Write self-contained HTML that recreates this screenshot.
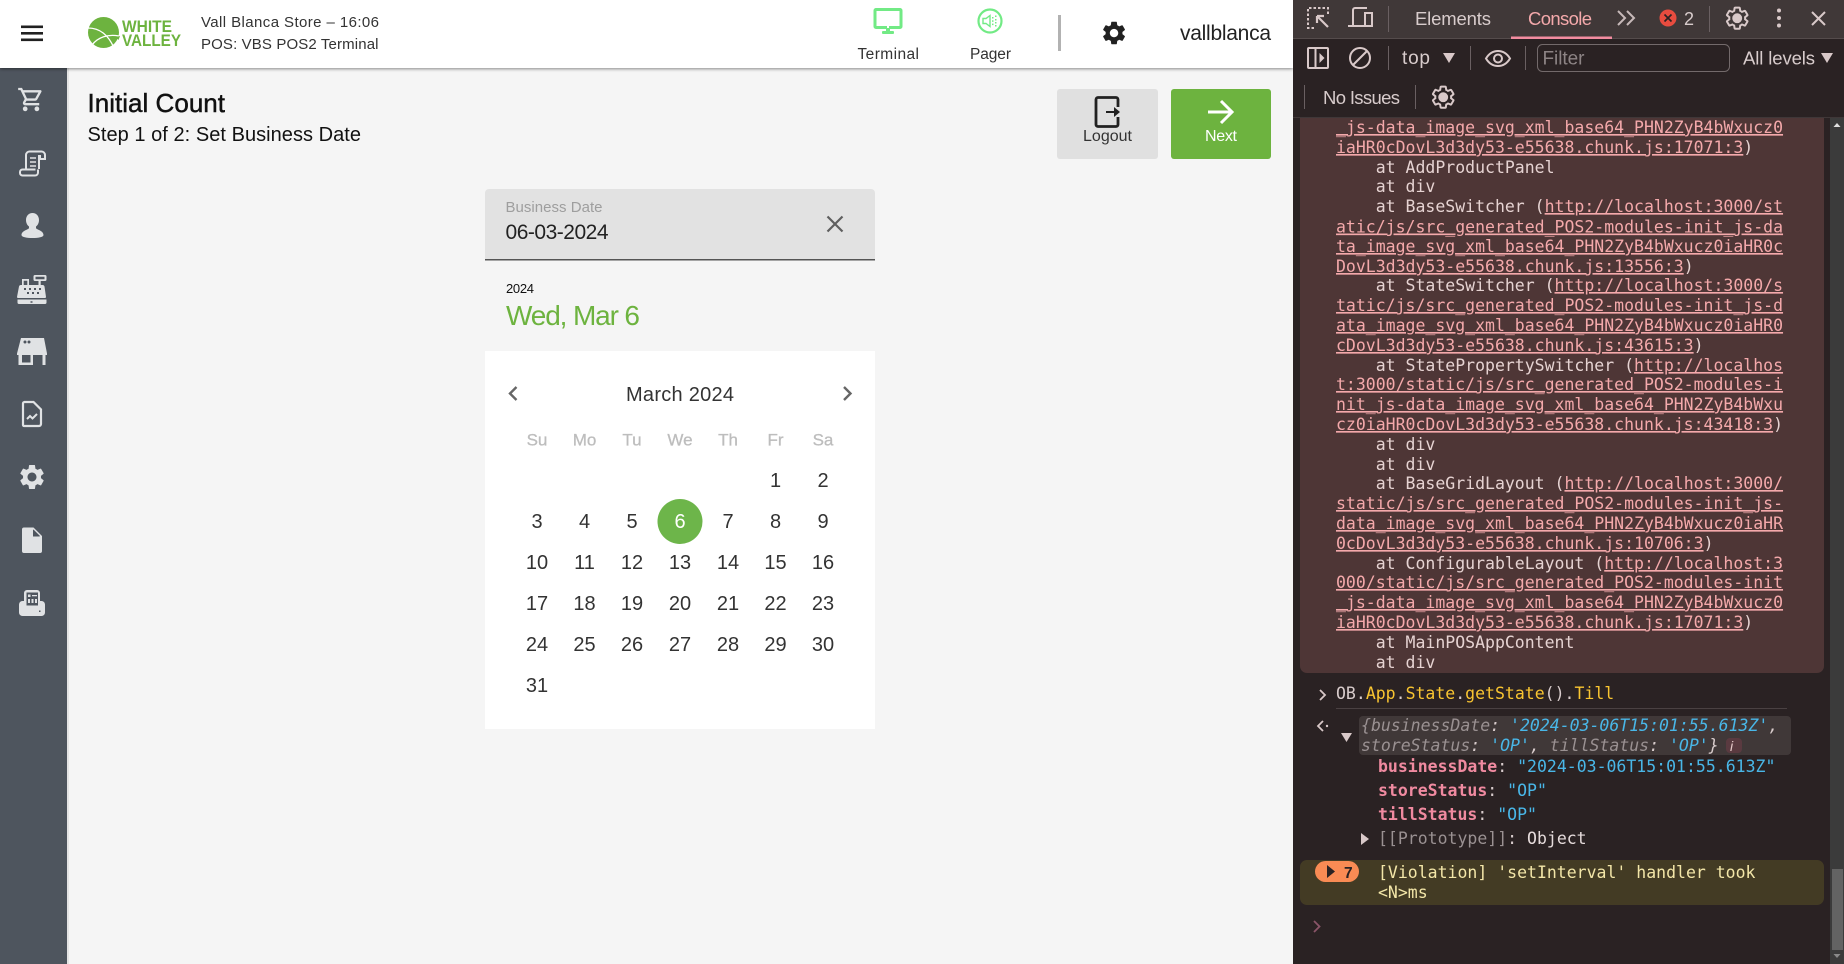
<!DOCTYPE html>
<html><head><meta charset="utf-8"><title>Initial Count</title>
<style>
html,body{margin:0;padding:0;width:1844px;height:964px;overflow:hidden;background:#f5f5f5}
svg{position:absolute;left:0;top:0;display:block}
text{font-family:"Liberation Sans",sans-serif}
.d{font-family:"DejaVu Sans Mono","Liberation Mono",monospace;font-size:16.5px;white-space:pre}
.l{fill:#f4a9ab;text-decoration:underline}
.p{fill:#e6d3d2}
.day{font-size:17px;fill:#bdbdbd;text-anchor:middle;stroke:#bdbdbd;stroke-width:.3px}
.n{font-size:20px;fill:#333;text-anchor:middle}
</style></head><body>
<svg width="1844" height="964" viewBox="0 0 1844 964" xmlns="http://www.w3.org/2000/svg">
<defs>
<filter id="sh" x="-5%" y="-20%" width="110%" height="160%"><feDropShadow dx="0" dy="1" stdDeviation="1.5" flood-color="#000" flood-opacity=".45"/></filter>
<path id="gear" d="M19.14,12.94c0.04-0.3,0.06-0.61,0.06-0.94c0-0.32-0.02-0.64-0.07-0.94l2.03-1.58c0.18-0.14,0.23-0.41,0.12-0.61 l-1.92-3.32c-0.12-0.22-0.37-0.29-0.59-0.22l-2.39,0.96c-0.5-0.38-1.03-0.7-1.62-0.94L14.4,2.81c-0.04-0.24-0.24-0.41-0.48-0.41 h-3.84c-0.24,0-0.43,0.17-0.47,0.41L9.25,5.35C8.66,5.59,8.12,5.92,7.63,6.29L5.24,5.33c-0.22-0.08-0.47,0-0.59,0.22L2.74,8.87 C2.62,9.08,2.66,9.34,2.86,9.48l2.03,1.58C4.84,11.36,4.8,11.69,4.8,12s0.02,0.64,0.07,0.94l-2.03,1.58 c-0.18,0.14-0.23,0.41-0.12,0.61l1.92,3.32c0.12,0.22,0.37,0.29,0.59,0.22l2.39-0.96c0.5,0.38,1.03,0.7,1.62,0.94l0.36,2.54 c0.05,0.24,0.24,0.41,0.48,0.41h3.84c0.24,0,0.44-0.17,0.47-0.41l0.36-2.54c0.59-0.24,1.13-0.56,1.62-0.94l2.39,0.96 c0.22,0.08,0.47,0,0.59-0.22l1.92-3.32c0.12-0.22,0.07-0.47-0.12-0.61L19.14,12.94z M12,15.6c-1.98,0-3.6-1.62-3.6-3.6 s1.62-3.6,3.6-3.6s3.6,1.62,3.6,3.6S13.98,15.6,12,15.6z"/>
</defs>

<!-- page bg -->
<rect width="1293" height="964" fill="#f5f5f5"/>

<!-- sidebar -->
<rect x="0" y="68" width="67" height="896" fill="#4e555e"/>
<rect x="67" y="68" width="2" height="896" fill="#d9d9d9" opacity=".6"/>

<!-- header -->
<rect width="1293" height="68" fill="#fff" filter="url(#sh)"/>
<g fill="#212121"><rect x="21" y="25.500" width="22" height="2.600"/><rect x="21" y="32" width="22" height="2.600"/><rect x="21" y="38.500" width="22" height="2.600"/></g>

<!-- logo -->
<circle cx="103.500" cy="32.500" r="15.500" fill="#6db33f"/>
<g fill="none" stroke="#fff" stroke-width="1.300"><path d="M88 28c11 0 20 6 26 20"/><path d="M92 45c6-8 16-11 27-9"/></g>
<path d="M116 37l4-1-1.500 4z" fill="#6db33f"/>
<text x="122" y="32" font-size="16.800" font-weight="700" fill="#6db33f" textLength="50" lengthAdjust="spacingAndGlyphs">WHITE</text>
<text x="122" y="46" font-size="16.800" font-weight="700" fill="#6db33f" textLength="59" lengthAdjust="spacingAndGlyphs">VALLEY</text>

<text x="201" y="27" font-size="15" fill="#333" textLength="178">Vall Blanca Store – 16:06</text>
<text x="201" y="49" font-size="15" fill="#333" textLength="177.500">POS: VBS POS2 Terminal</text>

<!-- terminal icon -->
<g fill="#72ea85">
<path d="M876 8h24a2.500 2.500 0 0 1 2.500 2.500v16a2.500 2.500 0 0 1-2.500 2.500h-24a2.500 2.500 0 0 1-2.500-2.500v-16a2.500 2.500 0 0 1 2.500-2.500zm.5 3v15h23v-15z" fill-rule="evenodd"/>
<rect x="886" y="29" width="4" height="3"/><rect x="882" y="31" width="12" height="3" rx="1"/><rect x="887" y="26" width="2" height="2" fill="#fff"/>
</g>
<text x="857.500" y="59" font-size="15.500" fill="#333" textLength="61.500">Terminal</text>
<!-- pager icon -->
<circle cx="990" cy="21" r="11.500" fill="none" stroke="#72ea85" stroke-width="2.200"/>
<path d="M983 18.500h3l4-3v11l-4-3h-3z" fill="none" stroke="#72ea85" stroke-width="1.400"/>
<g fill="#72ea85"><rect x="992" y="17" width="1.500" height="1.500"/><rect x="992" y="20.300" width="1.500" height="1.500"/><rect x="992" y="23.600" width="1.500" height="1.500"/><rect x="995" y="15.500" width="1.500" height="1.500"/><rect x="995" y="19" width="1.500" height="1.500"/><rect x="995" y="22" width="1.500" height="1.500"/><rect x="995" y="25" width="1.500" height="1.500"/></g>
<text x="970" y="59" font-size="15.500" fill="#333" textLength="41">Pager</text>
<rect x="1058" y="15" width="3" height="36" fill="#b2b2b2"/>
<use href="#gear" transform="translate(1100,19) scale(1.170)" fill="#212121"/>
<text x="1180" y="40" font-size="21" fill="#222" textLength="91">vallblanca</text>

<!-- titles -->
<text x="87.500" y="112" font-size="26" fill="#111" stroke="#111" stroke-width=".45" textLength="137.500">Initial Count</text>
<text x="87.500" y="141" font-size="20" fill="#111" textLength="273.500">Step 1 of 2: Set Business Date</text>

<!-- buttons -->
<rect x="1057" y="89" width="101" height="70" rx="3" fill="#e0e0e0"/>
<path d="M1118 101v-1.500a2 2 0 0 0-2-2h-18a2 2 0 0 0-2 2v25a2 2 0 0 0 2 2h18a2 2 0 0 0 2-2v-1.500" fill="none" stroke="#212121" stroke-width="2.800"/>
<path d="M1118 101v6M1118 117v6" stroke="#212121" stroke-width="2.800"/>
<path d="M1106 111h8v-4l6 5-6 5v-4h-8z" fill="#212121"/>
<text x="1083" y="141" font-size="16" fill="#333" textLength="49">Logout</text>
<rect x="1171" y="89" width="100" height="70" rx="3" fill="#6db33f"/>
<path d="M1208 112h24M1221 101l11 11-11 11" fill="none" stroke="#fff" stroke-width="3"/>
<text x="1205" y="141" font-size="16" fill="#fff" textLength="32">Next</text>

<!-- date field -->
<path d="M485 260v-67a4 4 0 0 1 4-4h382a4 4 0 0 1 4 4v67z" fill="#e2e2e2"/>
<rect x="485" y="259" width="390" height="1.500" fill="#555"/>
<text x="505.500" y="212" font-size="15" fill="#9e9e9e" textLength="97">Business Date</text>
<text x="505.500" y="239" font-size="21" fill="#222" textLength="103">06-03-2024</text>
<path d="M827.500 216.500l15 15M842.500 216.500l-15 15" stroke="#5f5f5f" stroke-width="2.200" fill="none"/>
<text x="506" y="293" font-size="13" fill="#111" textLength="28">2024</text>
<text x="506" y="325" font-size="28" fill="#6db33f" textLength="134">Wed, Mar 6</text>

<!-- calendar -->
<rect x="485" y="351" width="390" height="378" fill="#fff"/>
<text x="626" y="401" font-size="20" fill="#333" textLength="108">March 2024</text>
<path d="M516.500 387l-6.500 6.500 6.500 6.500" fill="none" stroke="#666" stroke-width="2.400"/>
<path d="M844 387l6.500 6.500-6.500 6.500" fill="none" stroke="#666" stroke-width="2.400"/>
<g class="h">
<text class="day" x="537" y="445.500">Su</text><text class="day" x="584.500" y="445.500">Mo</text><text class="day" x="632" y="445.500">Tu</text><text class="day" x="680" y="445.500">We</text><text class="day" x="728" y="445.500">Th</text><text class="day" x="775.500" y="445.500">Fr</text><text class="day" x="823" y="445.500">Sa</text>
</g>
<circle cx="680" cy="521.500" r="22.500" fill="#6db54a"/>
<text class="n" x="775.500" y="487">1</text><text class="n" x="823" y="487">2</text>
<text class="n" x="537" y="528">3</text><text class="n" x="584.500" y="528">4</text><text class="n" x="632" y="528">5</text><text class="n" x="680" y="528" style="fill:#fff">6</text><text class="n" x="728" y="528">7</text><text class="n" x="775.500" y="528">8</text><text class="n" x="823" y="528">9</text>
<text class="n" x="537" y="569">10</text><text class="n" x="584.500" y="569">11</text><text class="n" x="632" y="569">12</text><text class="n" x="680" y="569">13</text><text class="n" x="728" y="569">14</text><text class="n" x="775.500" y="569">15</text><text class="n" x="823" y="569">16</text>
<text class="n" x="537" y="610">17</text><text class="n" x="584.500" y="610">18</text><text class="n" x="632" y="610">19</text><text class="n" x="680" y="610">20</text><text class="n" x="728" y="610">21</text><text class="n" x="775.500" y="610">22</text><text class="n" x="823" y="610">23</text>
<text class="n" x="537" y="651">24</text><text class="n" x="584.500" y="651">25</text><text class="n" x="632" y="651">26</text><text class="n" x="680" y="651">27</text><text class="n" x="728" y="651">28</text><text class="n" x="775.500" y="651">29</text><text class="n" x="823" y="651">30</text>
<text class="n" x="537" y="692">31</text>

<!-- sidebar icons -->
<g fill="#e0e2e4">
<!-- cart -->
<path transform="translate(17,85.500) scale(1.170)" d="M15.550 13c.75 0 1.410-.41 1.750-1.030l3.580-6.490c.37-.66-.11-1.480-.87-1.480H5.210l-.94-2H1v2h2l3.600 7.590-1.350 2.440C4.520 15.370 5.480 17 7 17h12v-2H7l1.100-2h7.450zM6.160 6h12.150l-2.760 5H8.530L6.160 6zM7 18c-1.100 0-1.990.9-1.990 2S5.900 22 7 22s2-.9 2-2-.9-2-2-2zm10 0c-1.100 0-1.990.9-1.990 2s.89 2 1.990 2 2-.9 2-2-.9-2-2-2z"/>
<!-- receipt scroll -->
<g fill="none" stroke="#e0e2e4" stroke-width="2">
<path d="M26 169v-14a3.500 3.500 0 0 1 3.500-3.500h12a3.500 3.500 0 0 1 3.500 3.500v4h-5v-4"/>
<path d="M38 169.500v3a3 3 0 0 1-3 3h-12.500a2.500 2.500 0 0 1-2.500-2.500v-1a2.500 2.500 0 0 1 2.500-2.500h13"/>
<path d="M39 155v14"/>
<path d="M30 158h6M30 162h6M30 166h6" stroke-width="1.600"/>
</g>
<!-- person -->
<path d="M32.500 213c3.800 0 6.500 3 6.500 7 0 3-1.300 5.300-3 6.500v1.500c0 1.500 7.500 2.500 7.500 7 0 2-5 3-11 3s-11-1-11-3c0-4.500 7.500-5.500 7.500-7v-1.500c-1.700-1.200-3-3.500-3-6.500 0-4 2.700-7 6.500-7z"/>
<!-- register -->
<path fill-rule="evenodd" d="M35 275h10a1.500 1.500 0 0 1 1.500 1.500v3a1.500 1.500 0 0 1-1.500 1.500h-10a1.500 1.500 0 0 1-1.500-1.500v-3a1.500 1.500 0 0 1 1.500-1.500zm.5 1.700v2.600h9v-2.600z"/>
<rect x="38.500" y="281" width="2.200" height="4.500"/>
<path fill-rule="evenodd" d="M22 279h7v6h13.500a2 2 0 0 1 2 1.500l1.500 10.500a1 1 0 0 1-1 1H18a1 1 0 0 1-1-1l2-10.500a2 2 0 0 1 2-1.500h1zm1.700 1.700v4.300h3.600v-4.300zM24 288v2h2v-2zm5 0v2h2v-2zm5 0v2h2v-2zm5 0v2h2v-2zm-12 4v2h2v-2zm5 0v2h2v-2zm5 0v2h2v-2z"/>
<path fill-rule="evenodd" d="M17.500 299.500h29v3a1.500 1.500 0 0 1-1.500 1.500h-26a1.500 1.500 0 0 1-1.500-1.500zm13 1.700v1.600h2v-1.600z"/>
<!-- store -->
<path fill-rule="evenodd" d="M21 338h23l3 15.500v1.500h-1.500v10h-3v-10h-9.500v10h-14.500v-10h-1.500v-1.500zm1 17v7.500h8.500v-7.500zM25 340.500a1.500 1.500 0 1 0 0 3 1.500 1.500 0 0 0 0-3zm4 0a1.500 1.500 0 1 0 0 3 1.500 1.500 0 0 0 0-3z"/>
<!-- doc chart -->
<path fill="none" stroke="#e0e2e4" stroke-width="2.200" d="M24 402h9.500l7.500 7.500v14.500a2 2 0 0 1-2 2h-15a1 1 0 0 1-1-1v-21.500a1.500 1.500 0 0 1 1.500-1.500z"/>
<path fill="none" stroke="#e0e2e4" stroke-width="2" d="M27 419l3-3 2.500 2.500 4.500-4.500"/>
<!-- gear -->
<use href="#gear" transform="translate(17,462) scale(1.250)"/>
<!-- doc -->
<path d="M24 527.500h9.500l8.500 8.500v15a2 2 0 0 1-2 2h-16a2 2 0 0 1-2-2v-21.500a2 2 0 0 1 2-2zM33 529.500v7h7z" fill-rule="evenodd"/>
<path d="M33.500 529.500l6.500 6.500h-6.500z" fill="#4e555e"/>
<!-- pos -->
<path fill-rule="evenodd" d="M27 590h10a3 3 0 0 1 3 3v8h1.500a3.500 3.500 0 0 1 3.500 3.500v8a3.500 3.500 0 0 1-3.500 3.500h-19a3.500 3.500 0 0 1-3.500-3.500v-8a3.500 3.500 0 0 1 3.500-3.500h1.500v-8a3 3 0 0 1 3-3zm-.5 2.500v13h11.500v-13zM39 610.500v1.500h1.500v-1.500z"/>
<path d="M28 594.500h2.500v2.500h-2.500zM32 595h5v1.200h-5zM28 599h2v4h-2zM31.500 599h2v4h-2zM35 599h2v4h-2z"/>
</g>

<!-- DEVTOOLS -->
<rect x="1293" y="0" width="551" height="964" fill="#2a2223"/>
<rect x="1293" y="0" width="551" height="38" fill="#403838"/>
<rect x="1293" y="38" width="551" height="1" fill="#554c4c"/>
<rect x="1293" y="117" width="551" height="1" fill="#3f3738"/>

<!-- row1 -->
<g fill="none" stroke="#d9c9c9" stroke-width="2">
<path d="M1316 8h-8v20h8" stroke-dasharray="2.500 2"/>
<path d="M1309 8h19v8" stroke-dasharray="2.500 2"/>
<path d="M1317 16l11 11M1317 16h7M1317 16v7" stroke-width="2.200"/>
<path d="M1353 26v-16a2 2 0 0 1 2-2h12M1348 26h16"/>
<rect x="1365" y="13" width="7" height="13"/>
</g>
<rect x="1388" y="6" width="1" height="26" fill="#6a6062"/>
<text x="1415" y="25" font-size="18.500" fill="#d8cccc" textLength="76">Elements</text>
<text x="1528" y="25" font-size="18.500" fill="#f4a9ab" textLength="64">Console</text>
<rect x="1511" y="36.500" width="101" height="2.500" fill="#f28ca0"/>
<path d="M1618 11l7 7-7 7M1627 11l7 7-7 7" fill="none" stroke="#c7b9b9" stroke-width="2"/>
<circle cx="1668" cy="18" r="8.500" fill="#e84c3f"/>
<path d="M1664.500 14.500l7 7M1671.500 14.500l-7 7" stroke="#2a2223" stroke-width="1.700"/>
<text x="1684" y="25" font-size="18" fill="#d8cccc">2</text>
<rect x="1709" y="6" width="1" height="26" fill="#6a6062"/>
<use href="#gear" transform="translate(1724,5) scale(1.100)" fill="none" stroke="#d9c9c9" stroke-width="1.800"/>
<circle cx="1737" cy="18" r="3.500" fill="#d9c9c9"/>
<g fill="#d9c9c9"><circle cx="1779" cy="10.500" r="2"/><circle cx="1779" cy="18" r="2"/><circle cx="1779" cy="25.500" r="2"/></g>
<path d="M1812 12l13 13M1825 12l-13 13" stroke="#d9c9c9" stroke-width="2"/>

<!-- row2 -->
<rect x="1308" y="48" width="20" height="20" rx="1" fill="none" stroke="#d9c9c9" stroke-width="2"/>
<path d="M1315.500 48v20" stroke="#d9c9c9" stroke-width="2"/>
<path d="M1319.500 53l5 5-5 5z" fill="#d9c9c9"/>
<circle cx="1360" cy="58" r="10" fill="none" stroke="#d9c9c9" stroke-width="2"/>
<path d="M1353 65l14-14" stroke="#d9c9c9" stroke-width="2"/>
<rect x="1388" y="46" width="1" height="24" fill="#6a6062"/>
<text x="1402" y="64" font-size="19" fill="#d8cccc" textLength="28">top</text>
<path d="M1443 53h12l-6 10z" fill="#d9c9c9"/>
<rect x="1470" y="46" width="1" height="24" fill="#6a6062"/>
<path d="M1486 58.500c3-5 7-7.500 12-7.500s9 2.500 12 7.500c-3 5-7 7.500-12 7.500s-9-2.500-12-7.500z" fill="none" stroke="#d9c9c9" stroke-width="2"/>
<circle cx="1498" cy="58.500" r="4" fill="none" stroke="#d9c9c9" stroke-width="2"/>
<rect x="1525" y="46" width="1" height="24" fill="#6a6062"/>
<rect x="1537.500" y="44.500" width="192" height="27" rx="5" fill="#2a2223" stroke="#736a6b"/>
<text x="1542.500" y="64.500" font-size="19" fill="#8d8485" textLength="42">Filter</text>
<text x="1743" y="64.500" font-size="18.500" fill="#d8cccc" textLength="72">All levels</text>
<path d="M1821 53h12l-6 10z" fill="#d9c9c9"/>

<!-- row3 -->
<rect x="1304" y="85" width="1" height="24" fill="#6a6062"/>
<text x="1323" y="104" font-size="18.500" fill="#d8cccc" textLength="77">No Issues</text>
<rect x="1415" y="85" width="1" height="24" fill="#6a6062"/>
<use href="#gear" transform="translate(1430,84) scale(1.100)" fill="none" stroke="#d9c9c9" stroke-width="1.800"/>
<circle cx="1443" cy="97" r="3.500" fill="#d9c9c9"/>

<!-- error block -->
<path d="M1300 118h524v548a7 7 0 0 1-7 7h-510a7 7 0 0 1-7-7z" fill="#4e3636"/>
<g class="d">
<text class="d l" x="1336" y="133">_js-data_image_svg_xml_base64_PHN2ZyB4bWxucz0</text>
<text class="d" x="1336" y="153"><tspan class="l">iaHR0cDovL3d3dy53-e55638.chunk.js:17071:3</tspan><tspan class="p">)</tspan></text>
<text class="d p" x="1336" y="173">    at AddProductPanel</text>
<text class="d p" x="1336" y="192">    at div</text>
<text class="d" x="1336" y="212"><tspan class="p">    at BaseSwitcher (</tspan><tspan class="l">http://localhost:3000/st</tspan></text>
<text class="d l" x="1336" y="232.500">atic/js/src_generated_POS2-modules-init_js-da</text>
<text class="d l" x="1336" y="252">ta_image_svg_xml_base64_PHN2ZyB4bWxucz0iaHR0c</text>
<text class="d" x="1336" y="272"><tspan class="l">DovL3d3dy53-e55638.chunk.js:13556:3</tspan><tspan class="p">)</tspan></text>
<text class="d" x="1336" y="291"><tspan class="p">    at StateSwitcher (</tspan><tspan class="l">http://localhost:3000/s</tspan></text>
<text class="d l" x="1336" y="311">tatic/js/src_generated_POS2-modules-init_js-d</text>
<text class="d l" x="1336" y="331">ata_image_svg_xml_base64_PHN2ZyB4bWxucz0iaHR0</text>
<text class="d" x="1336" y="351"><tspan class="l">cDovL3d3dy53-e55638.chunk.js:43615:3</tspan><tspan class="p">)</tspan></text>
<text class="d" x="1336" y="371"><tspan class="p">    at StatePropertySwitcher (</tspan><tspan class="l">http://localhos</tspan></text>
<text class="d l" x="1336" y="390">t:3000/static/js/src_generated_POS2-modules-i</text>
<text class="d l" x="1336" y="410">nit_js-data_image_svg_xml_base64_PHN2ZyB4bWxu</text>
<text class="d" x="1336" y="430"><tspan class="l">cz0iaHR0cDovL3d3dy53-e55638.chunk.js:43418:3</tspan><tspan class="p">)</tspan></text>
<text class="d p" x="1336" y="450">    at div</text>
<text class="d p" x="1336" y="470">    at div</text>
<text class="d" x="1336" y="489"><tspan class="p">    at BaseGridLayout (</tspan><tspan class="l">http://localhost:3000/</tspan></text>
<text class="d l" x="1336" y="509">static/js/src_generated_POS2-modules-init_js-</text>
<text class="d l" x="1336" y="529">data_image_svg_xml_base64_PHN2ZyB4bWxucz0iaHR</text>
<text class="d" x="1336" y="549"><tspan class="l">0cDovL3d3dy53-e55638.chunk.js:10706:3</tspan><tspan class="p">)</tspan></text>
<text class="d" x="1336" y="569"><tspan class="p">    at ConfigurableLayout (</tspan><tspan class="l">http://localhost:3</tspan></text>
<text class="d l" x="1336" y="588">000/static/js/src_generated_POS2-modules-init</text>
<text class="d l" x="1336" y="608">_js-data_image_svg_xml_base64_PHN2ZyB4bWxucz0</text>
<text class="d" x="1336" y="628"><tspan class="l">iaHR0cDovL3d3dy53-e55638.chunk.js:17071:3</tspan><tspan class="p">)</tspan></text>
<text class="d p" x="1336" y="648">    at MainPOSAppContent</text>
<text class="d p" x="1336" y="668">    at div</text>
</g>

<!-- command -->
<path d="M1320 690l5 5-5 5" fill="none" stroke="#d9c9c9" stroke-width="1.800"/>
<text class="d" x="1336" y="699"><tspan fill="#d8cccc">OB.</tspan><tspan fill="#f9c531">App</tspan><tspan fill="#d8cccc">.</tspan><tspan fill="#f9c531">State</tspan><tspan fill="#d8cccc">.</tspan><tspan fill="#f9c531">getState</tspan><tspan fill="#d8cccc">().</tspan><tspan fill="#f9c531">Till</tspan></text>
<rect x="1336" y="708" width="451" height="1" fill="#4a4142"/>
<path d="M1323 721l-5 5 5 5" fill="none" stroke="#d9c9c9" stroke-width="1.800"/>
<circle cx="1327" cy="726" r="1.200" fill="#d9c9c9"/>
<rect x="1359" y="716" width="432" height="39" rx="4" fill="#403838"/>
<path d="M1341 733h11l-5.500 9z" fill="#d9c9c9"/>
<text class="d" x="1361" y="731" font-style="italic"><tspan fill="#9a9192">{</tspan><tspan fill="#9a9192">businessDate</tspan><tspan fill="#d8cccc">: </tspan><tspan fill="#49b7e8">'2024-03-06T15:01:55.613Z'</tspan><tspan fill="#d8cccc">,</tspan></text>
<text class="d" x="1361" y="751" font-style="italic"><tspan fill="#9a9192">storeStatus</tspan><tspan fill="#d8cccc">: </tspan><tspan fill="#49b7e8">'OP'</tspan><tspan fill="#d8cccc">, </tspan><tspan fill="#9a9192">tillStatus</tspan><tspan fill="#d8cccc">: </tspan><tspan fill="#49b7e8">'OP'</tspan><tspan fill="#d8cccc">}</tspan></text>
<rect x="1726" y="738" width="16" height="15" rx="4" fill="#5a3a40"/>
<text x="1730" y="751" font-size="14" font-style="italic" fill="#e6c9c9" font-family="Liberation Serif">i</text>
<text class="d" x="1378" y="772"><tspan fill="#f08aa0" font-weight="700">businessDate</tspan><tspan fill="#d8cccc">: </tspan><tspan fill="#49b7e8">"2024-03-06T15:01:55.613Z"</tspan></text>
<text class="d" x="1378" y="796"><tspan fill="#f08aa0" font-weight="700">storeStatus</tspan><tspan fill="#d8cccc">: </tspan><tspan fill="#49b7e8">"OP"</tspan></text>
<text class="d" x="1378" y="820"><tspan fill="#f08aa0" font-weight="700">tillStatus</tspan><tspan fill="#d8cccc">: </tspan><tspan fill="#49b7e8">"OP"</tspan></text>
<path d="M1361 833l8 6-8 6z" fill="#d9c9c9"/>
<text class="d" x="1378" y="844"><tspan fill="#9a9192">[[Prototype]]</tspan><tspan fill="#d8cccc">: </tspan><tspan fill="#e6dcdc">Object</tspan></text>

<!-- violation -->
<rect x="1300" y="860" width="524" height="45" rx="7" fill="#433b24"/>
<rect x="1315" y="861" width="44" height="21" rx="10.500" fill="#f98b54"/>
<path d="M1327 865l8 6.500-8 6.500z" fill="#2a2223"/>
<text x="1344" y="878" font-size="15.500" font-weight="700" fill="#2a2223" font-family="DejaVu Sans">7</text>
<text class="d" x="1378" y="878" fill="#f3e6a8">[Violation] 'setInterval' handler took</text>
<text class="d" x="1378" y="898" fill="#f3e6a8">&lt;N&gt;ms</text>
<path d="M1314 921l5.500 5.500-5.500 5.500" fill="none" stroke="#8a5568" stroke-width="1.800"/>

<!-- scrollbar -->
<rect x="1830" y="118" width="14" height="846" fill="#3b3b3b"/>
<path d="M1833.500 127l3.500-4 3.500 4z" fill="#e0e0e0"/>
<rect x="1832" y="869" width="11" height="81" fill="#636363"/>
<path d="M1833.500 954l3.500 4 3.500-4z" fill="#8a8a8a"/>
</svg>
</body></html>
